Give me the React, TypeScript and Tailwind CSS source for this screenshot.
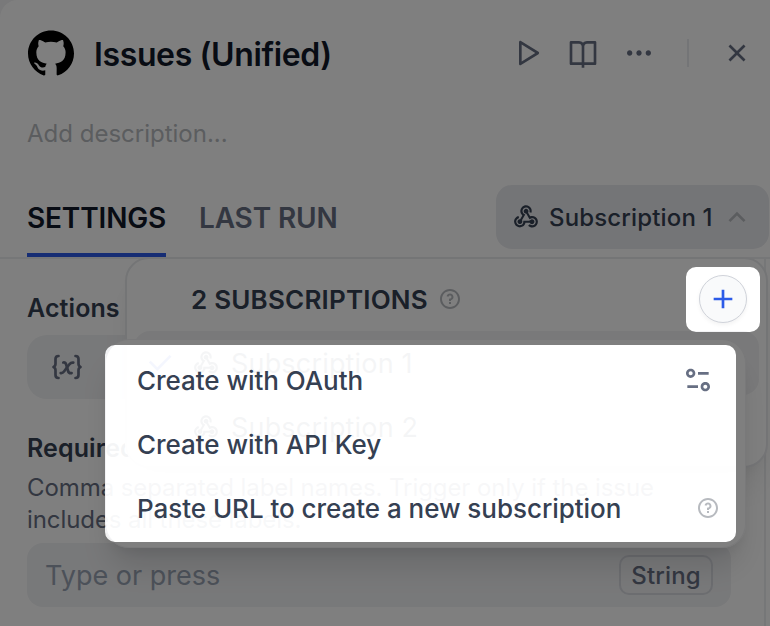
import React from "react";
import {
  RiAddLine,
  RiArrowUpSLine,
  RiBookOpenLine,
  RiCheckLine,
  RiCloseLine,
  RiEqualizer2Line,
  RiMoreFill,
  RiPlayLargeLine,
  RiQuestionLine,
  RiWebhookLine,
} from "react-icons/ri";
import { SiGithub } from "react-icons/si";

function VariableIcon() {
  return (
    <svg width="32" height="32" viewBox="0 0 32 32" fill="none" stroke="currentColor" strokeWidth="2.7" strokeLinecap="round" strokeLinejoin="round">
      <path d="M7.500 5C5.300 5 4.500 6 4.500 8v4.800c0 1.600-.5 2.600-2 3.200 1.500.6 2 1.600 2 3.200V24c0 2 .8 3 3 3" />
      <path d="M24.500 5c2.200 0 3 1 3 3v4.800c0 1.600.5 2.600 2 3.200-1.500.6-2 1.600-2 3.200V24c0 2-.8 3-3 3" />
      <path d="M12.300 11.500c1.700-.2 2.400.5 2.900 2.200l1.900 6.300c.5 1.800 1.300 2.500 3.500 2.100" />
      <path d="M22.300 11.600c-1.600-.3-2.700.2-3.900 1.700l-5.200 7c-1.100 1.500-2 2.100-3.500 1.800" />
    </svg>
  );
}

function SubscriptionRow({ name, selected }: { name: string; selected?: boolean }) {
  return (
    <div className={`flex h-16 items-center rounded-2xl pl-[10px] ${selected ? "bg-[#f3f3f5]" : ""}`}>
      <span className="flex w-[48px] items-center">
        {selected && <RiCheckLine size={32} className="text-[#2c5be8]" />}
      </span>
      <RiWebhookLine size={28} className="text-[#354052]" />
      <span className="ml-[11px] pt-[2px] text-[27px] tracking-[0.18px] text-[#354052]">{name}</span>
    </div>
  );
}

export default function App() {
  return (
    <div className="relative h-[626px] w-[770px] overflow-hidden bg-[#f2f2f4] font-['Inter','Liberation_Sans',sans-serif] text-[#354052]">
      <div className="h-full rounded-tl-[18px] bg-white">
        <header className="flex h-[106px] items-center pl-[28px] pr-[17px]">
          <SiGithub size={46} className="text-black" />
          <h1 className="ml-[20px] pt-[3px] text-[32px] font-semibold tracking-[-0.38px] text-[#101828]">Issues (Unified)</h1>
          <div className="ml-auto flex items-center text-[#676f83]">
            <RiPlayLargeLine size={32} />
            <RiBookOpenLine size={32} className="ml-[24px]" />
            <RiMoreFill size={32} className="ml-[24px]" />
            <span className="ml-[32px] h-7 w-[2px] bg-[#e9eaee]" />
            <RiCloseLine size={32} className="ml-[32px]" />
          </div>
        </header>
        <p className="flex h-[56px] items-center pl-[27px] text-[24px] text-[#b7babf]">Add description...</p>
        <nav className="flex h-[97px] items-start border-b-2 border-[#edeef0] pl-[27px] pt-[23px]">
          <div className="flex h-[72px] w-[139px] items-center whitespace-nowrap border-b-4 border-[#2c5be8] pb-[3px] text-[28px] font-semibold tracking-[-0.15px] text-[#101828]">SETTINGS</div>
          <div className="ml-[33px] flex h-[68px] items-center pb-[3px] text-[28px] font-semibold tracking-[-0.15px] text-[#676f83]">LAST RUN</div>
          <button className="ml-auto mr-px flex h-16 w-[273px] items-center rounded-[16px] bg-[#e9eaee] pl-4">
            <RiWebhookLine size={28} />
            <span className="ml-[9px] pt-[2px] text-[24px] font-medium tracking-[0.15px]">Subscription 1</span>
            <RiArrowUpSLine size={32} className="ml-[8px] text-[#b7babf]" />
          </button>
        </nav>
        <main className="mr-[4px] h-[367px] border-r-2 border-[#edeef0] pl-[27px] pr-[33px] pt-[33px]">
          <div className="h-8 text-[25px] font-semibold leading-8 tracking-[0.1px]">Actions</div>
          <div className="mt-[11px] flex h-16 items-center rounded-[20px] bg-[#f1f2f4] pl-6 text-[#676f83]">
            <VariableIcon />
          </div>
          <div className="mt-[33px] h-8 text-[25px] font-semibold leading-8 tracking-[0.1px]">Required</div>
          <p className="mt-[8px] whitespace-nowrap text-[24px] leading-8 tracking-[-0.08px] text-[#676f83]">
            Comma separated label names. Trigger only if the issue
            <br />
            includes all these labels.
          </p>
          <div className="mt-[7px] flex h-16 items-center justify-between rounded-[16px] bg-[#f1f2f4] pl-[18px] pr-[18px]">
            <span className="pt-[2px] text-[27px] text-[#98a2b2]">Type or press</span>
            <span className="flex h-10 w-[94px] items-center justify-center rounded-[10px] border-2 border-[#d8dae0] pt-[2px] text-[24px] font-medium tracking-[0.15px] text-[#676f83]">String</span>
          </div>
        </main>
      </div>

      <section className="absolute left-[125px] top-[257px] h-[211px] w-[643px] rounded-[24px] border-2 border-[#e9eaed] bg-white px-[7px] shadow-[0_24px_32px_-8px_rgba(9,9,11,0.08),0_8px_12px_-4px_rgba(9,9,11,0.03)]">
        <div className="flex h-[72px] items-center pl-[57px] pt-[8px]">
          <h2 className="text-[26px] font-semibold tracking-[0.2px]">2 SUBSCRIPTIONS</h2>
          <RiQuestionLine size={24} className="ml-[10px] text-[#b7babf]" />
        </div>
        <SubscriptionRow name="Subscription 1" selected />
        <SubscriptionRow name="Subscription 2" />
      </section>

      <button className="absolute left-[699px] top-[275px] flex size-12 items-center justify-center rounded-full border border-[#d0d3da] bg-[#f9fafb] shadow-[0_2px_4px_rgba(9,9,11,0.05)]">
        <RiAddLine size={32} className="shrink-0 text-[#2c5be8]" />
      </button>

      <ul className="absolute left-[105px] top-[339px] h-[209px] w-[641px] rounded-[24px] border border-[#e9eaed]/60 bg-white/95 px-[31px] pt-[8px] text-[26px] font-medium tracking-[-0.04px] shadow-[0_24px_32px_-8px_rgba(9,9,11,0.14),0_8px_12px_-4px_rgba(9,9,11,0.06)]">
        <li className="flex h-16 items-center justify-between">
          Create with OAuth
          <RiEqualizer2Line size={32} className="text-[#676f83]" />
        </li>
        <li className="flex h-16 items-center">Create with API Key</li>
        <li className="flex h-16 items-center justify-between">
          Paste URL to create a new subscription
          <RiQuestionLine size={24} className="-mr-[6px] text-[#b7babf]" />
        </li>
      </ul>

      <div className="pointer-events-none absolute inset-0 bg-black/50 [clip-path:path(evenodd,'M0_0H770V626H0ZM696_267H750A10_10_0_0_1_760_277V322A10_10_0_0_1_750_332H696A10_10_0_0_1_686_322V277A10_10_0_0_1_696_267ZM115_345H726A10_10_0_0_1_736_355V532A10_10_0_0_1_726_542H115A10_10_0_0_1_105_532V355A10_10_0_0_1_115_345Z')]" />
    </div>
  );
}
